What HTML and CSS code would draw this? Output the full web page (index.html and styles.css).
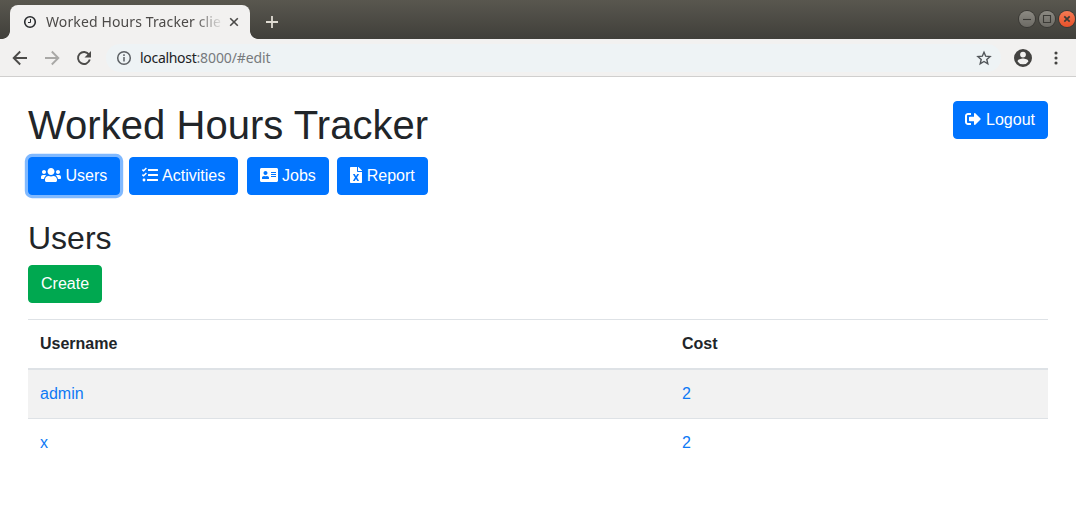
FILE: index.html
```html
<!DOCTYPE html>
<html lang="en">
<head>
<meta charset="utf-8">
<title>Worked Hours Tracker client</title>
<link rel="stylesheet" href="styles.css">
</head>
<body>
<header class="browser">
  <div class="tabstrip">
    <div class="tab">
      <svg class="favicon" viewBox="0 0 14 14"><circle cx="7" cy="7" r="5.3"/><path d="M7.5 4v3.500H5"/></svg>
      <span class="tab-title">Worked Hours Tracker clie</span>
      <svg class="tab-close" viewBox="0 0 10 10"><path d="M1.2 1.2l7.6 7.6M8.8 1.2L1.2 8.8"/></svg>
    </div>
    <svg class="new-tab" viewBox="0 0 12 12"><path d="M6 0v12M0 6h12"/></svg>
    <div class="window-controls">
      <span class="control"><svg viewBox="0 0 16 16"><path d="M4 8.500h8"/></svg></span>
      <span class="control"><svg viewBox="0 0 16 16"><path d="M4.500 4.500h7v7h-7z"/></svg></span>
      <span class="control control-close"><svg viewBox="0 0 16 16"><path d="M5.300 5.300l5.400 5.400M10.700 5.300l-5.400 5.400"/></svg></span>
    </div>
  </div>
  <div class="toolbar">
    <svg class="nav" viewBox="0 0 16 16"><path d="M15 8H2M8.200 1.500L1.700 8l6.500 6.500"/></svg>
    <svg class="nav nav-disabled" viewBox="0 0 16 16"><path d="M1 8h13M7.800 1.500L14.300 8l-6.500 6.500"/></svg>
    <svg class="nav" viewBox="0 0 16 16"><path d="M13 4.600A6 6 0 1 0 13.800 9.600"/><path class="solid" d="M15 1v6.500H8.500z"/></svg>
    <div class="address">
      <svg class="info" viewBox="0 0 16 16"><circle cx="8" cy="8" r="6.3"/><path d="M8 7v4.600M8 4.300v1.600"/></svg>
      <span class="url"><span class="host">localhost</span>:8000/#edit</span>
      <svg class="star" viewBox="0 0 16 16"><path d="M8 2.200l1.700 4 4.400.4-3.300 2.900 1 4.300L8 11.500l-3.800 2.300 1-4.300-3.300-2.900 4.400-.4z"/></svg>
    </div>
    <svg class="profile" viewBox="0 0 18 18"><path fill-rule="evenodd" d="M9 0a9 9 0 1 0 0 18A9 9 0 0 0 9 0zm0 2.700a2.900 2.900 0 1 1 0 5.800 2.900 2.900 0 0 1 0-5.800zm0 12.600a6.200 6.200 0 0 1-5.400-2.900c0-1.800 3.600-2.800 5.400-2.800s5.400 1 5.400 2.800A6.200 6.200 0 0 1 9 15.300z"/></svg>
    <svg class="menu" viewBox="0 0 4 14"><circle cx="2" cy="2" r="1.55"/><circle cx="2" cy="7" r="1.55"/><circle cx="2" cy="12" r="1.55"/></svg>
  </div>
</header>
<main class="page">
  <div class="heading">
    <h1>Worked Hours Tracker</h1>
    <button class="btn"><svg class="icon icon-logout" viewBox="0 0 512 512"><path d="M497 273L329 441c-15 15-41 4.500-41-17v-96H152c-13.300 0-24-10.700-24-24v-96c0-13.300 10.700-24 24-24h136V88c0-21.400 25.900-32 41-17l168 168c9.300 9.400 9.300 24.600 0 34zM192 436v-40c0-6.600-5.400-12-12-12H96c-17.700 0-32-14.300-32-32V160c0-17.700 14.300-32 32-32h84c6.600 0 12-5.400 12-12V76c0-6.600-5.400-12-12-12H96c-53 0-96 43-96 96v192c0 53 43 96 96 96h84c6.600 0 12-5.400 12-12z"/></svg> Logout</button>
  </div>
  <nav class="actions">
    <button class="btn btn-focus"><svg class="icon icon-users" viewBox="0 0 640 512"><path d="M96 224c35.300 0 64-28.700 64-64s-28.700-64-64-64-64 28.700-64 64 28.700 64 64 64zm448 0c35.300 0 64-28.700 64-64s-28.700-64-64-64-64 28.700-64 64 28.700 64 64 64zm32 32h-64c-17.600 0-33.500 7.100-45.100 18.600 40.300 22.100 68.900 62 75.100 109.400h66c17.700 0 32-14.300 32-32v-32c0-35.300-28.700-64-64-64zm-256 0c61.900 0 112-50.100 112-112S381.900 32 320 32 208 82.100 208 144s50.100 112 112 112zm76.800 32h-8.300c-20.800 10-43.900 16-68.500 16s-47.600-6-68.500-16h-8.300C179.600 288 128 339.600 128 403.200V432c0 26.500 21.500 48 48 48h288c26.500 0 48-21.500 48-48v-28.800c0-63.600-51.600-115.200-115.200-115.200zm-223.700-13.400C161.500 263.100 145.600 256 128 256H64c-35.300 0-64 28.700-64 64v32c0 17.700 14.300 32 32 32h65.900c6.300-47.400 34.900-87.300 75.200-109.400z"/></svg> Users</button>
    <button class="btn btn-tasks"><svg class="icon" viewBox="0 0 512 512"><path d="M192 64h304q16 0 16 16v32q0 16-16 16H208q-16 0-16-16zM208 224h288q16 0 16 16v32q0 16-16 16H208q-16 0-16-16v-32q0-16 16-16zM176 384h320q16 0 16 16v32q0 16-16 16H176q-16 0-16-16v-32q0-16 16-16z"/><circle cx="64" cy="416" r="46"/><path class="checks" d="M12 84l40 38 88-88M12 244l40 38 88-88"/></svg> Activities</button>
    <button class="btn"><svg class="icon icon-card" viewBox="0 0 576 512"><path fill-rule="evenodd" d="M528 32H48C21.500 32 0 53.500 0 80v352c0 26.500 21.500 48 48 48h480c26.500 0 48-21.500 48-48V80c0-26.500-21.500-48-48-48zm-352 96c35.300 0 64 28.700 64 64s-28.700 64-64 64-64-28.700-64-64 28.700-64 64-64zm112 236.800c0 10.600-10 19.200-22.400 19.200H86.400C74 384 64 375.400 64 364.800v-19.200c0-31.800 30.100-57.600 67.200-57.600h5c12.300 5.100 25.700 8 39.800 8s27.600-2.900 39.800-8h5c37.100 0 67.200 25.800 67.200 57.600zM352 288h160v32H352zM352 224h160v32H352zM352 160h160v32H352z"/></svg> Jobs</button>
    <button class="btn"><svg class="icon icon-file" viewBox="0 0 384 512"><path d="M224 136V0H24C10.700 0 0 10.700 0 24v464c0 13.300 10.700 24 24 24h336c13.300 0 24-10.700 24-24V160H248c-13.200 0-24-10.800-24-24zm60.100 106.500L224 336l60.100 93.500c5.100 8-.6 18.500-10.100 18.500h-34.900c-4.400 0-8.500-2.400-10.600-6.300C208.900 405.500 192 373 192 373c-6.400 14.800-10 20-36.600 68.800-2.100 3.900-6.100 6.300-10.500 6.300H110c-9.500 0-15.200-10.500-10.100-18.500l60.300-93.500-60.300-93.500c-5.200-8 .6-18.500 10.100-18.500h34.800c4.400 0 8.500 2.400 10.600 6.300 26.100 48.800 20 33.600 36.600 68.500 0 0 6.100-11.700 36.600-68.500 2.100-3.900 6.200-6.300 10.600-6.300H274c9.500-.1 15.200 10.400 10.100 18.400zM384 121.900v6.100H256V0h6.100c6.400 0 12.500 2.500 17 7l97.900 98c4.500 4.500 7 10.600 7 16.900z"/></svg> Report</button>
  </nav>
  <h2>Users</h2>
  <button class="btn btn-success">Create</button>
  <table class="table">
    <thead><tr><th class="col-name">Username</th><th>Cost</th></tr></thead>
    <tbody>
      <tr><td><a href="#edit">admin</a></td><td><a href="#edit">2</a></td></tr>
      <tr><td><a href="#edit">x</a></td><td><a href="#edit">2</a></td></tr>
    </tbody>
  </table>
</main>
</body>
</html>
```
FILE: styles.css
```css
* { box-sizing: border-box; }
body {
  margin: 0;
  background: #fff;
  color: #212529;
  font: 16px/1.5 "Liberation Sans", Arial, sans-serif;
  overflow: hidden;
}
svg { flex: none; }

/* Browser frame */
.browser { height: 77px; font-family: "Noto Sans", sans-serif; }
.tabstrip {
  display: flex;
  height: 39px;
  padding-left: 10px;
  background: linear-gradient(#59574f, #403f3a);
}
.tab {
  position: relative;
  display: flex;
  align-items: center;
  width: 240px;
  height: 34px;
  margin-top: 5px;
  padding-left: 13px;
  border-radius: 8px 8px 0 0;
  background: #f2f1f0;
}
.tab::before, .tab::after {
  content: "";
  position: absolute;
  bottom: 0;
  width: 8px;
  height: 8px;
}
.tab::before { left: -8px; background: radial-gradient(circle at 0 0, transparent 7.5px, #f2f1f0 8.2px); }
.tab::after { right: -8px; background: radial-gradient(circle at 100% 0, transparent 7.5px, #f2f1f0 8.2px); }
.favicon { width: 14px; height: 14px; fill: none; stroke: #292b2e; stroke-width: 1.6; }
.favicon path { stroke-width: 1; }
.tab-title {
  width: 178px;
  margin-left: 9px;
  white-space: nowrap;
  font-size: 14px;
  line-height: 20px;
  letter-spacing: 0.12px;
  color: #4c4a48;
  -webkit-mask-image: linear-gradient(90deg, #000 148px, transparent 178px);
  mask-image: linear-gradient(90deg, #000 148px, transparent 178px);
}
.tab-close { width: 10px; height: 10px; margin-left: 5px; fill: none; stroke: #4b4a48; stroke-width: 1.6; }
.new-tab { width: 12px; height: 12px; margin: 16px 0 0 16px; stroke: #e0dcd3; stroke-width: 1.8; }
.window-controls { display: flex; gap: 4px; margin: 11px 1px 0 auto; }
.control {
  width: 16px;
  height: 16px;
  border-radius: 50%;
  background: linear-gradient(#8c8a83, #6c6a64);
  box-shadow: 0 0 0 1px #3a3935;
}
.control svg { display: block; width: 16px; height: 16px; fill: none; stroke: #3b3a36; stroke-width: 1.1; }
.control-close { background: linear-gradient(#f67b54, #e7512a); }
.control-close svg { stroke-width: 1.7; }
.toolbar {
  display: flex;
  align-items: center;
  height: 38px;
  padding: 0 18px 0 12px;
  border-bottom: 1px solid #d0cfce;
  background: #f2f1f0;
}
.nav { width: 16px; height: 16px; margin-right: 16px; fill: none; stroke: #4c4b49; stroke-width: 1.9; }
.nav-disabled { stroke: #a9a8a6; }
.nav .solid { fill: #4c4b49; stroke: none; }
.address {
  display: flex;
  flex: 1;
  align-items: center;
  height: 28px;
  margin: 0 13px 0 -2px;
  padding: 0 9px 0 10px;
  border-radius: 14px;
  background: #eef3f5;
}
.info { width: 16px; height: 16px; fill: none; stroke: #5c6064; stroke-width: 1.5; }
.url { margin-left: 8px; font-size: 14px; letter-spacing: -0.1px; color: #777a7d; }
.host { letter-spacing: -0.3px; color: #202224; }
.star { width: 16px; height: 16px; margin-left: auto; fill: none; stroke: #505458; stroke-width: 1.4; }
.profile { width: 18px; height: 18px; fill: #444341; }
.menu { width: 4px; height: 14px; margin-left: 22px; fill: #444341; }

/* Page content */
.page { padding: 24px 28px 0; }
.heading { display: flex; align-items: flex-start; justify-content: space-between; }
h1, h2 { margin: 0 0 8px; font-weight: 400; line-height: 1.2; }
h1 { font-size: 40px; letter-spacing: 0.04px; }
h2 { margin-top: 24px; font-size: 32px; }
.btn {
  display: inline-block;
  height: 38px;
  padding: 6px 12px;
  border: 1px solid #0074ff;
  border-radius: 4px;
  background: #0074ff;
  color: #fff;
  font: inherit;
  vertical-align: middle;
}
.btn-focus { box-shadow: 0 0 0 3.2px #80b9ff; }
.btn-success { display: block; border-color: #00a850; background: #00a850; }
.icon { width: 16px; height: 16px; vertical-align: -2px; fill: currentColor; overflow: visible; }
.icon-logout { margin: 0 0.5px 0 -0.5px; }
.icon-users { width: 20px; }
.icon-card { width: 18px; }
.icon-file { width: 12px; }
.btn-tasks .icon { margin-right: 0.8px; }
.checks { fill: none; stroke: currentColor; stroke-width: 46; }
.actions { display: flex; gap: 8.45px; }
.table {
  width: 100%;
  margin-top: 16px;
  border-collapse: collapse;
}
.table th, .table td { padding: 12px; border-top: 1px solid #dee2e6; text-align: left; }
.table thead th { border-bottom: 2px solid #dee2e6; }
.col-name { width: 642px; }
.table tbody tr:nth-child(odd) { background: #f2f2f2; }
.table a { color: #0e79f5; text-decoration: none; }
```
